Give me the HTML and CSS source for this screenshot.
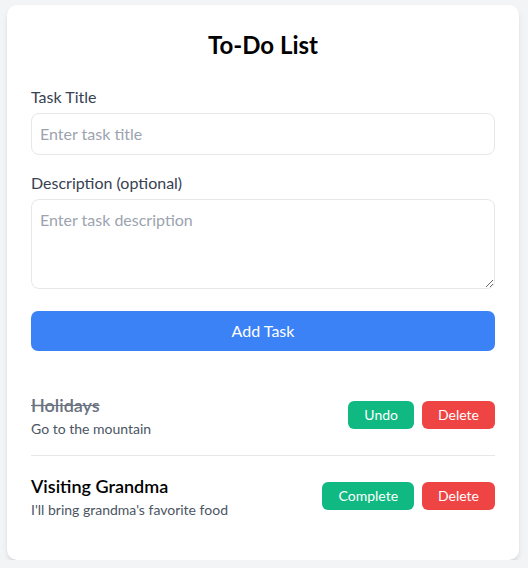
FILE: index.html
```html
<!DOCTYPE html>
<html lang="en">
<head>
<meta charset="utf-8">
<title>To-Do List</title>
<link rel="stylesheet" href="styles.css">
</head>
<body>
<main class="card">
  <h1 class="title">To-Do List</h1>
  <form class="form">
    <div class="field">
      <label class="label" for="t">Task Title</label>
      <input id="t" class="input" type="text" placeholder="Enter task title">
    </div>
    <div class="field">
      <label class="label" for="d">Description (optional)</label>
      <textarea id="d" class="input textarea" rows="3" placeholder="Enter task description"></textarea>
    </div>
    <button type="button" class="add-btn">Add Task</button>
  </form>
  <ul class="tasks">
    <li class="task">
      <div class="task-text">
        <div class="task-title done">Holidays</div>
        <div class="task-desc">Go to the mountain</div>
      </div>
      <div class="actions">
        <button type="button" class="btn green">Undo</button>
        <button type="button" class="btn red">Delete</button>
      </div>
    </li>
    <li class="task">
      <div class="task-text">
        <div class="task-title">Visiting Grandma</div>
        <div class="task-desc">I'll bring grandma's favorite food</div>
      </div>
      <div class="actions">
        <button type="button" class="btn green">Complete</button>
        <button type="button" class="btn red">Delete</button>
      </div>
    </li>
  </ul>
</main>
</body>
</html>
```
FILE: styles.css
```css
* { box-sizing: border-box; }
html, body { margin: 0; padding: 0; }
body {
  background: #f3f4f6;
  font-family: Lato, "Noto Sans", "Liberation Sans", sans-serif;
  padding: 5px 9px 0 7px;
}
.card {
  background: #fff;
  width: 512px;
  border-radius: 10px;
  box-shadow: 0 4px 6px -1px rgba(0,0,0,0.1), 0 2px 4px -2px rgba(0,0,0,0.1);
  padding: 24px;
}
.title {
  margin: 0 0 24px;
  font-size: 24px;
  line-height: 32px;
  font-weight: 700;
  text-align: center;
  color: #000;
}
.form { display: flex; flex-direction: column; }
.field { display: flex; flex-direction: column; margin-bottom: 16px; }
.field + .field { margin-bottom: 22px; }
.label {
  font-size: 16px;
  line-height: 24px;
  color: #374151;
  margin-bottom: 4px;
}
.input {
  font-family: inherit;
  font-size: 16px;
  line-height: 24px;
  padding: 8px;
  border: 1px solid #e5e7eb;
  border-radius: 8px;
  color: #111827;
  outline: none;
  display: block;
  width: 100%;
  margin: 0;
}
.input::placeholder { color: #9ca3af; }
.textarea { height: 90px; resize: vertical; }
.add-btn {
  font-family: inherit;
  font-size: 16px;
  line-height: 24px;
  padding: 8px;
  background: #3b82f6;
  color: #fff;
  border: none;
  border-radius: 7px;
  width: 100%;
}
.tasks { list-style: none; margin: 24px 0 0; padding: 0; }
.task {
  display: flex;
  align-items: center;
  justify-content: space-between;
  padding: 16px 0;
  border-bottom: 1px solid #e5e7eb;
}
.task:last-child { border-bottom: none; }
.task-title {
  font-size: 18px;
  line-height: 28px;
  font-weight: 600;
  color: #000;
}
.task-title.done { text-decoration: line-through; color: #6b7280; }
.task-desc { font-size: 14px; line-height: 20px; color: #4b5563; }
.actions { display: flex; gap: 8px; }
.btn {
  font-family: inherit;
  font-size: 14px;
  line-height: 20px;
  padding: 4px 16px;
  border: none;
  border-radius: 6px;
  color: #fff;
}
.green { background: #10b981; }
.red { background: #ef4444; }
```
